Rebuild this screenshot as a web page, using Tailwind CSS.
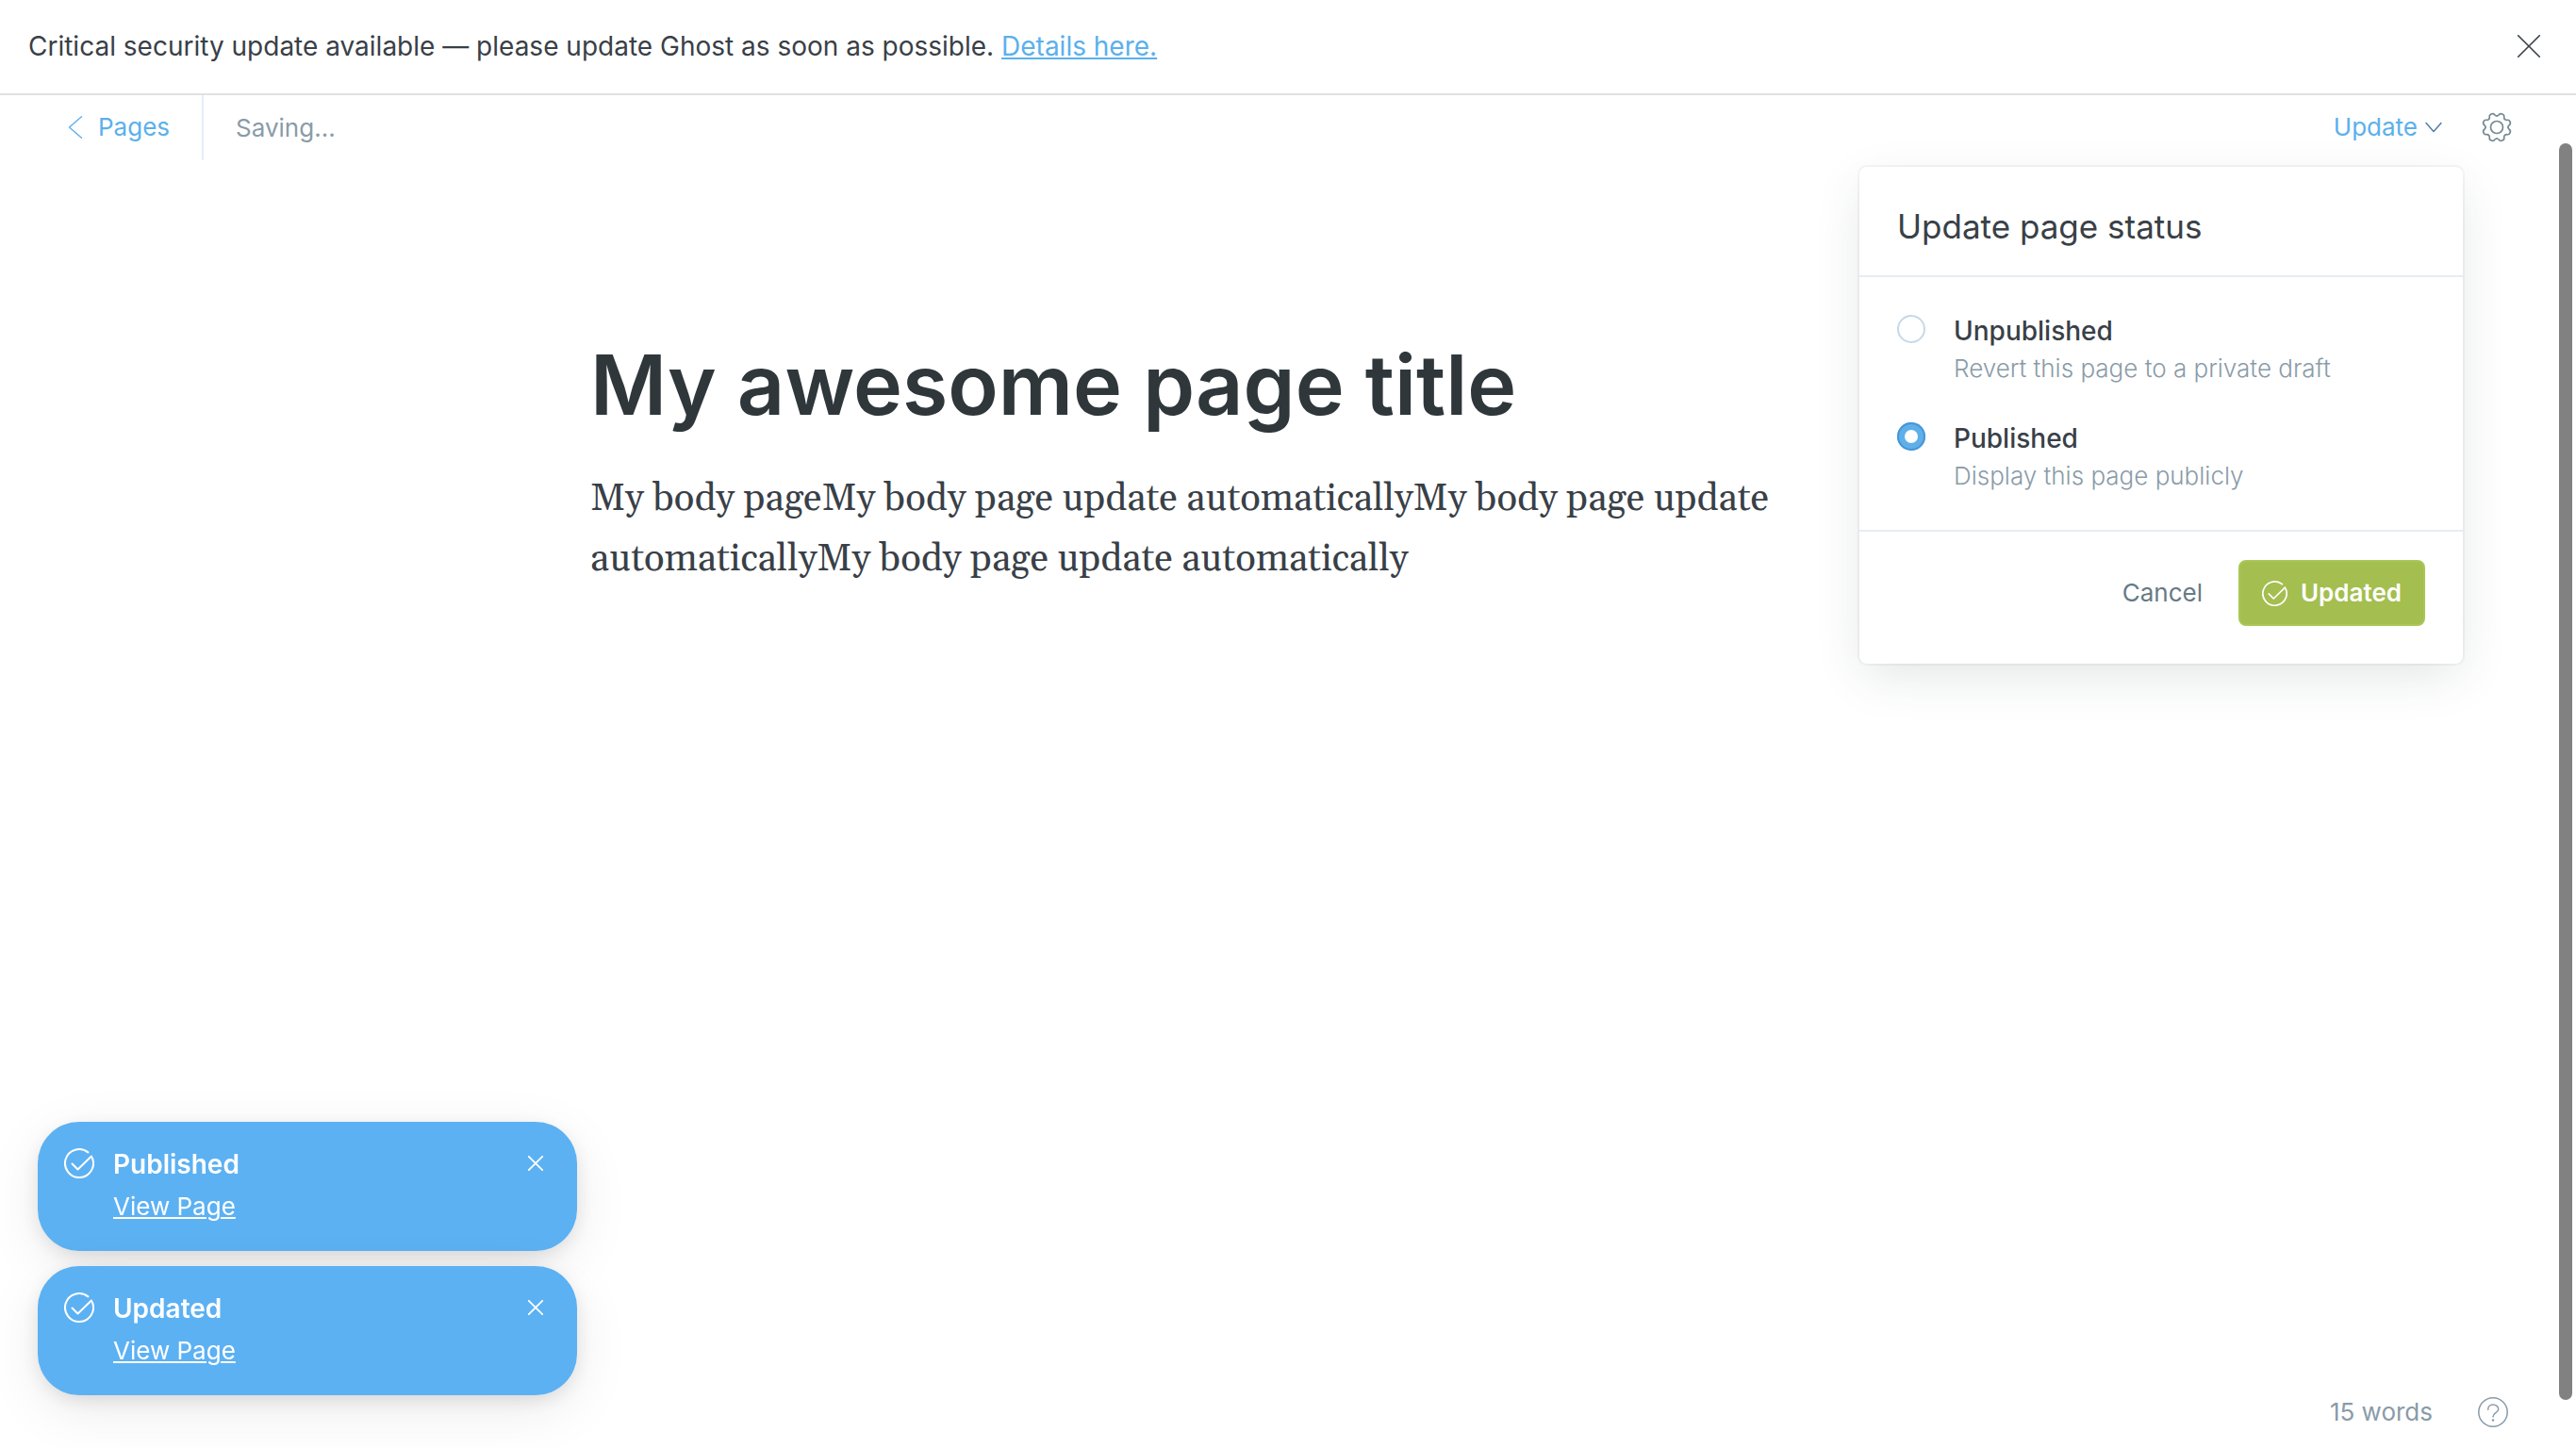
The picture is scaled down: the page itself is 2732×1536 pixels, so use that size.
<!DOCTYPE html>
<html lang="en">
<head>
<meta charset="utf-8">
<meta name="viewport" content="width=device-width, initial-scale=1">
<title>Edit page - Ghost</title>
<script src="https://cdn.jsdelivr.net/npm/@tailwindcss/browser@4"></script>
</head>
<body class="flex min-h-screen flex-col bg-white font-['Inter',sans-serif] text-[26px] leading-8 text-[#394047]">

<svg class="hidden" aria-hidden="true">
  <symbol id="check" viewBox="0 0 32 32">
    <g fill="none" stroke="currentColor" stroke-width="2" stroke-linecap="round" stroke-linejoin="round">
      <path d="M25.4 4.4A15 15 0 1 0 29.8 10.2"/>
      <path d="M8.5 16.5L14.5 22.5L29 8.5"/>
    </g>
  </symbol>
  <symbol id="close" viewBox="0 0 24 24">
    <path d="M.7.7L23.3 23.3M23.3.7L.7 23.3" fill="none" stroke="currentColor" stroke-width="1.6" stroke-linecap="round"/>
  </symbol>
</svg>

<div class="flex items-center justify-between border-b-2 border-[#dfe1e3] px-[30px] pt-[33px] pb-[34px] text-[28px]" role="alert">
  <p>Critical security update available — please update Ghost as soon as possible. <a href="#" class="text-[#5bb0ec] underline decoration-2 underline-offset-2">Details here.</a></p>
  <button type="button" aria-label="Close" class="mr-2"><svg class="size-6"><use href="#close"/></svg></button>
</div>

<div class="relative flex flex-1 flex-col">
  <header class="flex items-start justify-between pr-[68px] pl-[72px]">
    <div class="flex items-center">
      <a href="#" class="flex h-[69px] items-center gap-4 border-r-2 border-[#e5eef5] pr-[34px] pb-[2px] text-[#5bb0ec]">
        <svg class="h-6 w-4" viewBox="0 0 16 24" fill="none" stroke="currentColor" stroke-width="1.4" stroke-linecap="round" stroke-linejoin="round"><path d="M14.5 .8L1.5 12L14.5 23.2"/></svg>
        Pages
      </a>
      <span class="pl-[34px] text-[#8a9ba8]">Saving...</span>
    </div>
    <div class="flex h-[69px] items-center gap-[42px] pb-[2px]">
      <button type="button" class="flex items-center gap-2 text-[#5bb0ec]">Update
        <svg class="h-3 w-[18px] text-[#4a7aa8]" viewBox="0 0 18 12" fill="none" stroke="currentColor" stroke-width="1.4" stroke-linecap="round" stroke-linejoin="round"><path d="M1 1.5L9 10.5L17 1.5"/></svg>
      </button>
      <button type="button" aria-label="Settings" class="text-[#738a94]">
        <svg class="size-8" viewBox="-16 -16 32 32" fill="none" stroke="currentColor" stroke-width="1.7" stroke-linecap="round">
          <defs><path id="tooth" d="M-4.600-11.100C-3.300-11.600-3-12.600-2.800-13.400C-2.500-14.700-1.500-15.200 0-15.200S2.500-14.700 2.800-13.400C3-12.600 3.300-11.600 4.600-11.100"/></defs>
          <circle r="6.500"/>
          <use href="#tooth" transform="rotate(22.5)"/>
          <use href="#tooth" transform="rotate(67.5)"/>
          <use href="#tooth" transform="rotate(112.5)"/>
          <use href="#tooth" transform="rotate(157.5)"/>
          <use href="#tooth" transform="rotate(202.5)"/>
          <use href="#tooth" transform="rotate(247.5)"/>
          <use href="#tooth" transform="rotate(292.5)"/>
          <use href="#tooth" transform="rotate(337.5)"/>
        </svg>
      </button>
    </div>
  </header>

  <main class="mx-auto w-full max-w-[1480px] pt-[185px]">
    <h1 class="text-[88px] leading-[106px] font-semibold text-[#2f373b]">My awesome page title</h1>
    <p class="mt-[37px] max-w-[1300px] font-['Gelasio','Georgia','Liberation_Serif',serif] text-[40px] leading-[64px]">My body pageMy body page update automaticallyMy body page update automaticallyMy body page update automatically</p>
  </main>

  <footer class="mt-auto flex items-center justify-end gap-12 pr-[72px] pb-[22px] text-[#8a9ba8]">
    <span>15 words</span>
    <button type="button" aria-label="Help">
      <svg class="size-8" viewBox="0 0 32 32" fill="none" stroke="currentColor" stroke-width="1.5" stroke-linecap="round"><circle cx="16" cy="16" r="15.2"/><path d="M10.7 13.2C10.7 10 13 8 16 8S21.7 10.200 21.700 12.800C21.700 17 16 16.500 16 21"/><circle cx="16" cy="24.500" r=".6" fill="currentColor"/></svg>
    </button>
  </footer>

  <form class="absolute top-[76px] right-[120px] w-[640px] rounded-lg bg-white shadow-[0_0_0_2px_rgba(0,0,0,0.04),0_16px_52px_-6px_rgba(57,64,71,0.15)]">
    <h2 class="border-b-2 border-[#e5eef3] px-10 pt-[41px] pb-[30px] text-[35px] leading-[44px]">Update page status</h2>
    <div class="flex flex-col gap-[35px] border-b-2 border-[#e5eef5] px-10 pt-9 pb-[39px]">
      <label class="flex items-start gap-[30px]">
        <input type="radio" name="status" class="mt-1 size-[30px] shrink-0 appearance-none rounded-full border-2 border-[#c5d9e8] bg-white">
        <span class="flex flex-col gap-1 pt-[3px]">
          <span class="text-[28px] leading-9 font-medium">Unpublished</span>
          <span class="leading-9 font-light text-[#8a9ba8]">Revert this page to a private draft</span>
        </span>
      </label>
      <label class="flex items-start gap-[30px]">
        <input type="radio" name="status" checked class="mt-1 size-[30px] shrink-0 appearance-none rounded-full bg-white shadow-[inset_0_0_0_2px_#4596d9,inset_0_0_0_8px_#5fafe8]">
        <span class="flex flex-col gap-1 pt-[3px]">
          <span class="text-[28px] leading-9 font-medium">Published</span>
          <span class="leading-9 font-light text-[#8a9ba8]">Display this page publicly</span>
        </span>
      </label>
    </div>
    <div class="flex items-center justify-end gap-[38px] px-10 pt-[30px] pb-10">
      <button type="button" class="text-[#667a85]">Cancel</button>
      <button type="submit" class="flex h-[70px] items-center gap-[14px] rounded-lg border-2 border-[#a9c756] bg-[#a4be50] px-[23px] font-semibold text-white"><svg class="size-[27px]"><use href="#check"/></svg>Updated</button>
    </div>
  </form>
</div>

<!-- Notifications -->
<aside class="fixed bottom-14 left-10 flex w-[572px] flex-col gap-4 text-white">
  <div class="flex items-start rounded-[44px] bg-[#5cb1f3] pt-7 pr-9 pb-[29px] pl-7 shadow-[0_16px_60px_0_rgba(0,0,0,0.08),0_6px_24px_-4px_rgba(0,0,0,0.14)]">
    <svg class="size-8 shrink-0"><use href="#check"/></svg>
    <div class="flex flex-1 flex-col gap-[10px] pl-5">
      <span class="text-[28px] leading-[34px] font-semibold">Published</span>
      <a href="#" class="self-start leading-9 underline decoration-2 underline-offset-2">View Page</a>
    </div>
    <button type="button" aria-label="Dismiss" class="mt-2"><svg class="size-4" viewBox="0 0 16 16" fill="none" stroke="currentColor" stroke-width="1.8" stroke-linecap="round"><path d="M.8.8L15.200 15.200M15.200.8L.8 15.200"/></svg></button>
  </div>
  <div class="flex items-start rounded-[44px] bg-[#5cb1f3] pt-7 pr-9 pb-[29px] pl-7 shadow-[0_16px_60px_0_rgba(0,0,0,0.08),0_6px_24px_-4px_rgba(0,0,0,0.14)]">
    <svg class="size-8 shrink-0"><use href="#check"/></svg>
    <div class="flex flex-1 flex-col gap-[10px] pl-5">
      <span class="text-[28px] leading-[34px] font-semibold">Updated</span>
      <a href="#" class="self-start leading-9 underline decoration-2 underline-offset-2">View Page</a>
    </div>
    <button type="button" aria-label="Dismiss" class="mt-2"><svg class="size-4" viewBox="0 0 16 16" fill="none" stroke="currentColor" stroke-width="1.8" stroke-linecap="round"><path d="M.8.8L15.200 15.200M15.200.8L.8 15.200"/></svg></button>
  </div>
</aside>

<!-- Scroll thumb -->
<div class="fixed top-[152px] right-1 bottom-[51px] w-[14px] rounded-full bg-[#818181]"></div>

</body>
</html>
